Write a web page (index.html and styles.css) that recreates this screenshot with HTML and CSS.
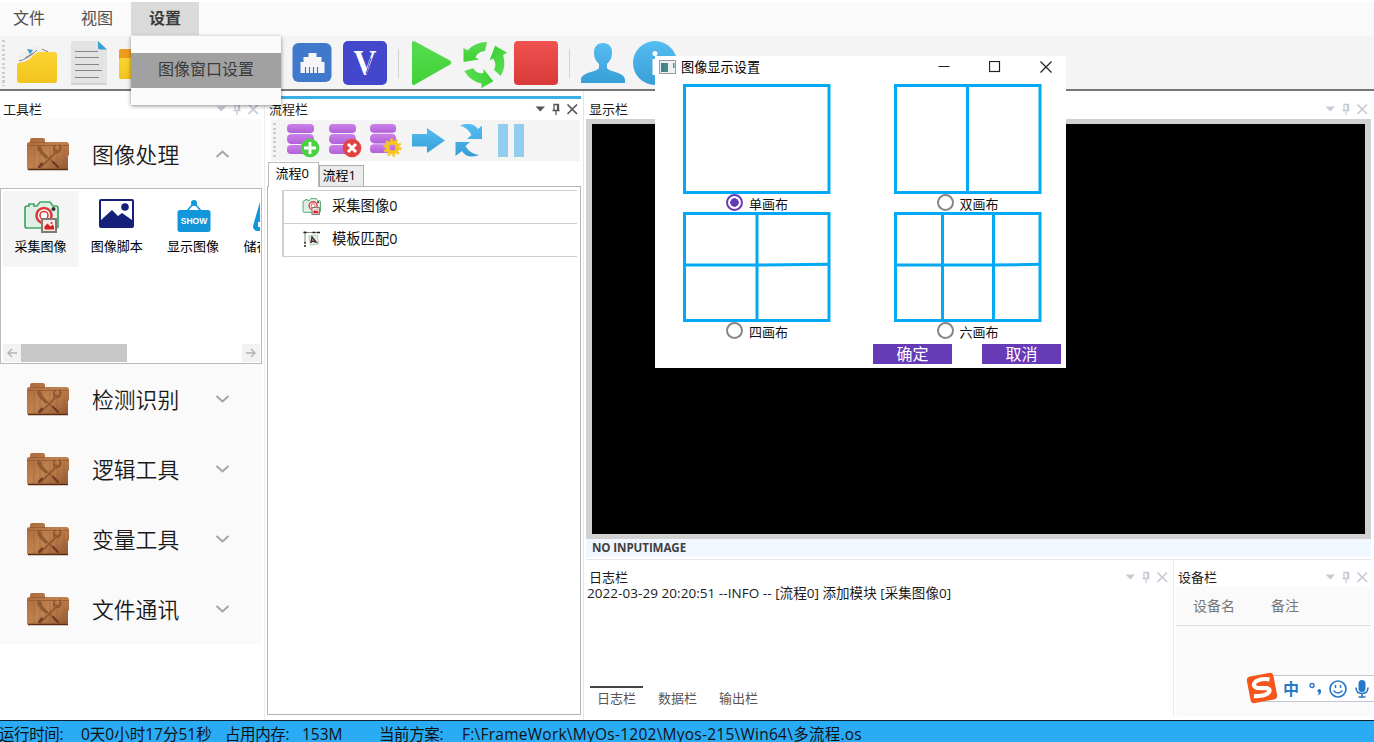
FILE: index.html
```html
<!DOCTYPE html>
<html lang="zh-CN">
<head>
<meta charset="utf-8">
<title>流程编辑器</title>
<link rel="stylesheet" href="styles.css">
</head>
<body>
<svg class="defs" width="0" height="0">
  <defs>
    <linearGradient id="gy" x1="0" y1="0" x2="0" y2="1"><stop offset="0" stop-color="#fbd433"/><stop offset="1" stop-color="#f2c31c"/></linearGradient>
    <linearGradient id="gg" x1="0" y1="0" x2="0" y2="1"><stop offset="0" stop-color="#58dc52"/><stop offset="1" stop-color="#3fd136"/></linearGradient>
    <linearGradient id="gr" x1="0" y1="0" x2="0" y2="1"><stop offset="0" stop-color="#f05252"/><stop offset="1" stop-color="#d83a3a"/></linearGradient>
    <linearGradient id="gb" x1="0" y1="0" x2="0" y2="1"><stop offset="0" stop-color="#55bdf2"/><stop offset="1" stop-color="#389fd6"/></linearGradient>
    <linearGradient id="gp" x1="0" y1="0" x2="0" y2="1"><stop offset="0" stop-color="#cb80ea"/><stop offset="1" stop-color="#b161d6"/></linearGradient>
    <linearGradient id="gw" x1="0" y1="0" x2="1" y2="1"><stop offset="0" stop-color="#a9693d"/><stop offset=".5" stop-color="#c0834f"/><stop offset="1" stop-color="#91552f"/></linearGradient>
    <symbol id="wood" viewBox="0 0 44 34">
      <path d="M4 5V3q0-2 2-2h11q2 0 2 2v2h21q3 0 3 3v10l-1 1v12q0 2-2 2H3q-2 0-2-2V7q0-2 3-2z" fill="url(#gw)"/>
      <path d="M4 5.500h15M1.500 8.500h41" stroke="#9a5d35" stroke-width="1"/>
      <path d="M8 10v22M14 10v22M24 10v22M31 10v22M38 10v22" stroke="#a0623a" stroke-width=".8" opacity=".7"/>
      <path d="M2 32.500h40" stroke="#5a2d12" stroke-width="1.600"/>
      <path d="M12 8l3 1.500 2 5 5 5-2 2.500-5-4.500-4-5.500z" fill="#8f5a31"/>
      <path d="M29 8l-1 4 2.500 2 3.500-1 0-4q2 3-1 6l-4 1-15 15M28.500 16q-2-6 1-8" fill="none" stroke="#8f5a31" stroke-width="1.800"/>
      <path d="M21 20l6 5" stroke="#8f5a31" stroke-width="1.500"/>
      <path d="M13 30l3-3.500M27 25l5 5" stroke="#6a3822" stroke-width="2" stroke-linecap="round"/>
    </symbol>
    <symbol id="cam" viewBox="0 0 36 34">
      <path d="M4 7h2V5h5v2h3l3-4h10l3 4h3q2 0 2 2v18q0 2-2 2H4q-2 0-2-2V9q0-2 2-2z" fill="#dff0e4" stroke="#44a565" stroke-width="1.700"/>
      <circle cx="21" cy="16.500" r="7.500" fill="#fff" stroke="#dd3b3b" stroke-width="2.600"/>
      <circle cx="21" cy="16.500" r="4" fill="none" stroke="#dd3b3b" stroke-width="1.600"/>
      <circle cx="30.500" cy="10" r="2" fill="#333"/>
      <rect x="19" y="20" width="14" height="13" fill="#f6e6e4" stroke="#827975" stroke-width="2"/>
      <path d="M21.500 30.500v-3l3-3 3 3 2-2 1.500 2v3z" fill="#d91f1f"/><circle cx="28.500" cy="24" r="1" fill="#d91f1f"/>
    </symbol>
    <symbol id="db" viewBox="0 0 32 32">
      <g fill="url(#gp)"><rect x="0" y="0" width="27" height="9" rx="4"/><rect x="0" y="10" width="27" height="10" rx="4.500"/><rect x="0" y="21" width="27" height="9" rx="4"/></g>
    </symbol>
    <symbol id="caret" viewBox="0 0 16 16"><path d="M3.500 5.500h9.500L8.250 10.500z" fill="currentColor"/></symbol>
    <symbol id="pin" viewBox="0 0 16 16"><path d="M6 3.500h4.500v6H6zM4.500 9.500h7M8 9.500v4.500M9.500 3.500v6" fill="none" stroke="currentColor" stroke-width="1.300"/></symbol>
    <symbol id="x" viewBox="0 0 16 16"><path d="M3.500 3.500l9.500 9.500M13 3.500l-9.500 9.500" stroke="currentColor" stroke-width="1.700"/></symbol>
    <symbol id="down" viewBox="0 0 16 12"><path d="M2.500 3L8.500 8.500 14.500 3" fill="none" stroke="#a5a5a5" stroke-width="2"/></symbol>
    <path id="arc" d="M4.500 24V10l4 2.500Q16 4 28 4L26 13Q19 13 16.500 19.500L20 21.500z"/>
  </defs>
</svg>

<div class="app">
  <nav class="menubar">
    <div class="menu">文件</div>
    <div class="menu">视图</div>
    <div class="menu menu-open">设置
      <div class="dropdown"><div class="dropdown-item">图像窗口设置</div></div>
    </div>
  </nav>

  <div class="toolbar">
    <i class="grip"></i>
    <svg class="tool" viewBox="0 0 50 50">
      <path d="M6 18l19-11 4 3 11 6-3 16H10z" fill="#eeeeee"/>
      <path d="M7 23q9-2 18-11M7 26q9-1 20-11M13 20l8-5M30 11l6 3" stroke="#858585" stroke-width="1" fill="none"/>
      <path d="M15 11l6 1-3 4z" fill="#3698cf"/>
      <path d="M5 27q0-2.500 3-2.500c12 0 12-10.500 20-10.500h14q3 0 3 3v25q0 3-3 3H8q-3 0-3-3z" fill="url(#gy)"/>
    </svg>
    <svg class="tool" viewBox="0 0 50 50">
      <path d="M9 5q0-2 2-2h25l9 9v33q0 2-2 2H11q-2 0-2-2z" fill="#e2e3e4"/><path d="M9 46h36" stroke="#cbcccd" stroke-width="1.500"/>
      <path d="M36 3l9 8.500h-7q-2 0-2-2z" fill="#3ba0d4"/>
      <path d="M13 13.500h23M13 19.500h24M13 26.500h24M13 32.500h27M13 39.500h24" stroke="#858585" stroke-width="1"/>
    </svg>
    <svg class="tool" viewBox="0 0 50 50"><path d="M7 13q0-2 2-2h12l5 4h19v12H7z" fill="#ef9b20"/><rect x="7" y="20" width="39" height="21" rx="2" fill="url(#gy)"/></svg>
    <svg class="tool tool-net" viewBox="0 0 50 50">
      <rect x="5.500" y="5" width="39" height="39" rx="6" fill="#4078cc"/>
      <path d="M21.500 15h8v4h5v5h3v11H13.500V24h3v-5h5z" fill="#f5f5f5"/><path d="M18.500 29v6M22.500 29v6M26.500 29v6M30.500 29v6" stroke="#4078cc" stroke-width="1.200"/>
    </svg>
    <svg class="tool tool-v" viewBox="0 0 50 50">
      <rect x="3" y="3" width="44" height="44" rx="5" fill="#4247cc"/>
      <text x="0" y="37" text-anchor="middle" class="v-mark" transform="translate(25 0) scale(.88 1)">V</text>
      <path d="M26 36L31 20" stroke="#4247cc" stroke-width="1"/>
    </svg>
    <i class="sep"></i>
    <svg class="tool tool-play" viewBox="0 0 50 50"><path d="M6 5q0-3 3-1.500L44 22.500q2.500 2 0 4L9 46.500Q6 48 6 45z" fill="url(#gg)"/></svg>
    <svg class="tool tool-cycle" viewBox="0 0 50 50">
      <g fill="url(#gg)"><use href="#arc"/><use href="#arc" transform="rotate(120 25 25)"/><use href="#arc" transform="rotate(240 25 25)"/></g>
    </svg>
    <svg class="tool tool-stop" viewBox="0 0 50 50"><rect x="3" y="3" width="44" height="44" rx="4" fill="url(#gr)"/></svg>
    <i class="sep"></i>
    <svg class="tool tool-user" viewBox="0 0 50 50"><path d="M25 5c6 0 9 4 9 9 0 6-2 9-5 12v4c2 4 18 4 18 12v3H3v-3c0-8 16-8 18-12v-4c-3-3-5-6-5-12 0-5 3-9 9-9z" fill="url(#gb)"/></svg>
    <svg class="tool" viewBox="0 0 50 50"><circle cx="25" cy="25" r="22" fill="url(#gb)"/><circle cx="25" cy="15.500" r="2.500" fill="#fff"/><path d="M22.500 21h5v16h-5z" fill="#fff"/></svg>
  </div>

  <main class="main">
    <section class="left">
      <header class="dock"><span>工具栏</span><svg><use href="#caret"/></svg><svg><use href="#pin"/></svg><svg><use href="#x"/></svg></header>
      <div class="tools">
        <div class="group group-open"><svg class="wood"><use href="#wood"/></svg><b>图像处理</b><svg class="chev chev-up"><use href="#down"/></svg></div>
        <div class="list">
          <div class="cards">
            <div class="card card-on"><svg width="36" height="34"><use href="#cam"/></svg><span>采集图像</span></div>
            <div class="card"><svg width="36" height="34" viewBox="0 0 36 34"><path d="M2 0h31q2 0 2 2v25q0 2-2 2H2q-2 0-2-2V2q0-2 2-2z" fill="#15207b"/><rect x="2" y="2" width="31" height="24" fill="#fff"/><path d="M2 21l11-10 6 6 4-3 10 7v5H2z" fill="#15207b"/><circle cx="26" cy="8" r="3.800" fill="#15207b"/></svg><span>图像脚本</span></div>
            <div class="card"><svg width="36" height="34" viewBox="0 0 36 34"><path d="M10 13l8-9 8 9" fill="none" stroke="#1296db" stroke-width="1.600"/><circle cx="18" cy="4" r="3" fill="#1296db"/><rect x="1.500" y="11" width="33" height="22" rx="2.500" fill="#1296db"/><text x="18" y="25" text-anchor="middle" class="show">SHOW</text></svg><span>显示图像</span></div>
            <div class="card"><svg width="36" height="34" viewBox="0 0 36 34"><path d="M8 3h20l7 24q0 5-5 5H6q-5 0-5-5z" fill="#1296db"/><path d="M6 23h24v5H6z" fill="#fff"/></svg><span>储存图像</span></div>
          </div>
          <div class="hscroll"><svg viewBox="0 0 18 18"><path d="M14 9H5M9 5L5 9l4 4" fill="none" stroke="#b3b3b3" stroke-width="1.400"/></svg><i></i><svg viewBox="0 0 18 18"><path d="M4 9h9M9 5l4 4-4 4" fill="none" stroke="#b3b3b3" stroke-width="1.400"/></svg></div>
        </div>
        <div class="group"><svg class="wood"><use href="#wood"/></svg><b>检测识别</b><svg class="chev"><use href="#down"/></svg></div>
        <div class="group"><svg class="wood"><use href="#wood"/></svg><b>逻辑工具</b><svg class="chev"><use href="#down"/></svg></div>
        <div class="group"><svg class="wood"><use href="#wood"/></svg><b>变量工具</b><svg class="chev"><use href="#down"/></svg></div>
        <div class="group"><svg class="wood"><use href="#wood"/></svg><b>文件通讯</b><svg class="chev"><use href="#down"/></svg></div>
      </div>
    </section>

    <section class="flow">
      <header class="dock dock-active"><span>流程栏</span><svg><use href="#caret"/></svg><svg><use href="#pin"/></svg><svg><use href="#x"/></svg></header>
      <div class="flowbar">
        <i class="grip"></i>
        <svg viewBox="0 0 34 34"><use href="#db" width="32" height="32"/><circle cx="23" cy="24" r="9.300" fill="#4ad142"/><path d="M23 18v12M17 24h12" stroke="#fff" stroke-width="2.800"/></svg>
        <svg viewBox="0 0 34 34"><use href="#db" width="32" height="32"/><circle cx="23" cy="24" r="9.300" fill="#e14444"/><path d="M19 20l8 8M27 20l-8 8" stroke="#fff" stroke-width="3"/></svg>
        <svg viewBox="0 0 34 34"><use href="#db" width="31" height="31"/><circle cx="22.500" cy="23.500" r="7.800" fill="none" stroke="#f6c522" stroke-width="2.800" stroke-dasharray="2.450 2.450"/><circle cx="22.500" cy="23.500" r="5" fill="none" stroke="#f6c522" stroke-width="4"/></svg>
        <svg viewBox="0 0 34 34"><path d="M0 10h15V4l18 12.500L15 29v-6.500H0z" fill="url(#gb)"/></svg>
        <svg viewBox="0 0 34 34"><path d="M7 1.500Q19-3 25 5l4-3.500V15H14l4.500-4Q15 4 7 1.500zM26 31q-12 4.500-17-4l-6.500 5V18H17l-4.500 4Q17 30 26 31z" fill="url(#gb)"/></svg>
        <svg viewBox="0 0 34 34"><path d="M3 0h10v33H3zM19 0h10v33H19z" fill="#93cdee"/></svg>
      </div>
      <div class="tabs"><div class="tab tab-on">流程<span>0</span></div><div class="tab">流程<span>1</span></div></div>
      <div class="flowbody">
        <div class="steps">
          <div class="step"><svg viewBox="0 0 36 34"><use href="#cam"/></svg>采集图像0</div>
          <div class="step"><svg viewBox="0 0 18 18"><path d="M2.500 1v13M1 2.500h16" stroke="#666" stroke-width=".8"/><path d="M1 2.500h3M10 2.500h3M14.500 2.500h3M2.500 12v1.500M2.500 15v2" stroke="#222" stroke-width="1.500"/><path d="M6 6l9-1 1 9-8 1z" fill="#e2f1e7" stroke="#9cc7ab" stroke-width=".8"/><path d="M8.500 13l1-6 4 5-4-1" fill="none" stroke="#4d252c" stroke-width="1.500"/></svg>模板匹配0</div>
        </div>
      </div>
    </section>

    <section class="right">
      <header class="dock"><span>显示栏</span><svg><use href="#caret"/></svg><svg><use href="#pin"/></svg><svg><use href="#x"/></svg></header>
      <div class="viewer"></div>
      <div class="imgstate">NO INPUTIMAGE</div>
      <div class="bottom">
        <div class="log">
          <header class="dock"><span>日志栏</span><svg><use href="#caret"/></svg><svg><use href="#pin"/></svg><svg><use href="#x"/></svg></header>
          <div class="logtext">2022-03-29 20:20:51 --INFO -- [流程0] 添加模块 [采集图像0]</div>
          <div class="logtabs"><span class="on">日志栏</span><span>数据栏</span><span>输出栏</span></div>
        </div>
        <div class="device">
          <header class="dock"><span>设备栏</span><svg><use href="#caret"/></svg><svg><use href="#pin"/></svg><svg><use href="#x"/></svg></header>
          <div class="devtable"><div class="devhead"><span>设备名</span><span>备注</span></div></div>
        </div>
      </div>
    </section>
  </main>

  <footer class="status"><span class="s1">运行时间:</span><span class="s2">0天0小时17分51秒</span><span class="s3">占用内存:</span><span class="s4">153M</span><span class="s5">当前方案:</span><span class="s6">F:\FrameWork\MyOs-1202\Myos-215\Win64\多流程.os</span></footer>
</div>

<div class="dialog">
  <div class="titlebar">
    <svg width="17" height="14" viewBox="0 0 17 14"><rect x=".5" y=".5" width="16" height="13" fill="#eef1f3" stroke="#949ba1"/><rect x="2" y="3" width="7" height="9" fill="#448f83"/><rect x="2" y="3" width="3" height="9" fill="#4b79a3"/><rect x="14" y="3" width="1.500" height="5" fill="#4b9a83"/></svg>
    <span>图像显示设置</span>
    <svg class="win" viewBox="0 0 12 12"><path d="M.5 5.500h11" stroke="#222"/></svg>
    <svg class="win" viewBox="0 0 12 12"><rect x=".5" y=".5" width="10" height="10" fill="none" stroke="#222" stroke-width="1.200"/></svg>
    <svg class="win" viewBox="0 0 12 12"><path d="M.5.500l11 11M11.500.500l-11 11" stroke="#222" stroke-width="1.200"/></svg>
  </div>
  <div class="layouts">
    <div class="opt"><svg class="pane" viewBox="0 0 148 110"><rect x="1.500" y="1.500" width="144.500" height="107"/></svg><label><i class="radio radio-on"></i>单画布</label></div>
    <div class="opt"><svg class="pane" viewBox="0 0 148 110"><rect x="1.500" y="1.500" width="144.500" height="107"/><path d="M73.500 1v108"/></svg><label><i class="radio"></i>双画布</label></div>
    <div class="opt"><svg class="pane" viewBox="0 0 148 110"><rect x="1.500" y="1.500" width="144.500" height="107"/><path d="M74 1v108M1 53h73l73-.7"/></svg><label><i class="radio"></i>四画布</label></div>
    <div class="opt"><svg class="pane" viewBox="0 0 148 110"><rect x="1.500" y="1.500" width="144.500" height="107"/><path d="M48.500 1v108M99.500 1v108M1 53h98l48-.7"/></svg><label><i class="radio"></i>六画布</label></div>
  </div>
  <div class="buttons"><button>确定</button><button>取消</button></div>
</div>

<div class="ime">
  <svg class="ime-logo" width="32" height="32" viewBox="0 0 32 32"><g transform="rotate(-11 16 16)"><rect x="2.500" y="2.500" width="27" height="27" rx="4" fill="#f6561b"/><path d="M25 9Q17 6 11 8.500 6 12 11.500 15q4 1 9 2 5 2.500 0 5.500-5 2-14 0" fill="none" stroke="#fff" stroke-width="4.200"/></g></svg>
  <span class="ime-cn">中</span>
  <svg width="14" height="14" viewBox="0 0 14 14"><circle cx="3" cy="3.500" r="2" fill="none" stroke="#2878c8" stroke-width="1.400"/><path d="M8.500 8q2.500-2 3.500.500.500 4-3.500 5 1.500-1.500 1.300-3-1.800 0-1.300-2.500z" fill="#2878c8"/></svg>
  <svg class="smile" width="18" height="18" viewBox="0 0 18 18"><circle cx="9" cy="9" r="8" fill="none" stroke="#2878c8" stroke-width="1.700"/><path d="M6.500 5v3M11.500 5v3M4.500 10.500q4.500 5 9 0" fill="none" stroke="#2878c8" stroke-width="1.500"/></svg>
  <svg class="mic" width="14" height="18" viewBox="0 0 14 18"><rect x="3.500" y="0" width="7" height="12" rx="3.500" fill="#2878c8"/><path d="M1 7.500q0 6 6 6t6-6M7 13v4M3.500 17h7" fill="none" stroke="#2878c8" stroke-width="1.600"/></svg>
</div>
</body>
</html>
```
FILE: styles.css
```css
* { box-sizing: border-box; }
body { margin: 0; width: 1374px; height: 742px; overflow: hidden; position: relative; background: #fff; color: #1a1a1a; font: 13px/18px "Open Sans", "Noto Sans CJK SC", sans-serif; white-space: nowrap; }
svg { display: block; flex: none; }
.defs { position: absolute; }
.app { display: flex; flex-direction: column; height: 742px; padding-top: 2px; }

.menubar { display: flex; height: 34px; background: #fafafa; font-size: 16px; color: #505050; flex: none; }
.menu { width: 68px; height: 33px; line-height: 32px; padding-left: 13px; }
.menu-open { position: relative; margin-left: -5px; padding-left: 18px; background: #dadada; font-weight: 600; color: #3a3a3a; }
.dropdown { position: absolute; z-index: 5; left: 0; top: 34px; width: 150px; height: 69px; padding: 17px 0; background: #fafafa; box-shadow: 0 1px 4px rgba(0,0,0,.45); font-weight: 400; }
.dropdown-item { height: 35px; line-height: 32px; padding-left: 27px; background: #a1a1a1; color: #3a3a3a; }

.toolbar { display: flex; align-items: center; height: 55px; padding: 1px 0 0 5px; background: #f4f4f4; border-bottom: 2px solid #777; flex: none; }
.grip { width: 3px; height: 46px; margin-left: -3px; background: repeating-linear-gradient(#ccc 0 2px, transparent 2px 4.500px); }
.tool { width: 50px; height: 50px; }
.grip + .tool { margin-left: 7px; }
.tool-net { margin-left: 125px; }
.tool-v { margin-left: 3px; }
.sep { width: 1px; height: 29px; background: #d2d2d2; margin-left: 8px; }
.tool-play { margin-left: 7px; }
.tool-cycle { margin-left: 3px; }
.tool-stop { margin-left: 2px; }
.tool-user { margin-left: 8px; }
.tool-user + .tool { margin-left: 2px; }
.v-mark { font: bold 36px "Liberation Serif", serif; fill: #fff; }

.main { display: flex; height: 629px; flex: none; }
.dock { display: flex; align-items: center; height: 20px; color: #c5cbd6; flex: none; }
.dock span { flex: 1; color: #1a1a1a; }
.dock svg { width: 16px; height: 16px; }

.left { width: 265px; padding: 8px 2px 0 0; border-right: 1px solid #ececec; flex: none; }
.left .dock { padding: 0 1px 0 3px; }
.tools { width: 262px; background: #fafafa; }
.group { display: flex; align-items: center; height: 70px; padding-left: 26px; }
.group-open { height: 69px; }
.wood { width: 44px; height: 34px; }
.group b { width: 122px; margin: 0 0 0 22px; font-family: "Noto Sans CJK SC", sans-serif; font-size: 21.800px; line-height: 30px; font-weight: 350; color: #1a1a1a; }
.chev { width: 16px; height: 12px; }
.chev-up { transform: scaleY(-1); }
.list { height: 176px; border: 1px solid #b9bbc0; background: #fff; padding: 2px 1px 1px 2px; display: flex; flex-direction: column; justify-content: space-between; }
.cards { display: flex; gap: .3px; overflow: hidden; }
.card { width: 76px; height: 76px; padding-top: 8px; display: flex; flex-direction: column; align-items: center; flex: none; color: #000; }
.card-on { background: #f5f5f5; }
.card span { margin: 4px 1px 0 0; }
.show { font: bold 8.500px "Liberation Sans", sans-serif; fill: #fff; }
.hscroll { display: flex; height: 18px; }
.hscroll svg { width: 18px; height: 18px; background: #f2f2f2; }
.hscroll i { width: 106px; background: #c7c7c7; margin-right: auto; }

.flow { width: 319px; padding: 5px 2px 5px 0; border-right: 1px solid #e6e6e6; flex: none; display: flex; flex-direction: column; }
.dock-active { height: 24px; padding: 0 1px 1px 4px; border-top: 3px solid #3cafe4; color: #555; }
.flowbar { display: flex; align-items: center; height: 41px; margin: 0 1px 0 6px; padding: 0 0 0 5px; background: #f4f4f4; flex: none; }
.flowbar .grip { height: 35px; margin: 0 11px 0 -3px; }
.flowbar svg { width: 34px; height: 34px; margin-right: 7.500px; }
.tabs { display: flex; align-items: flex-end; height: 25px; padding-left: 2.500px; flex: none; }
.tab { height: 21px; width: 45px; line-height: 19px; padding-left: 3px; border: 1px solid #acacac; border-bottom: 0; background: #ececec; color: #000; }
.tab-on { position: relative; height: 25px; width: 51px; margin-bottom: -1px; line-height: 21px; padding-left: 7px; background: #fff; border-color: #bbb; }
.flowbody { flex: 1; margin-left: 2px; padding: 3px 3px 0 14px; border: 1px solid #b5b5b5; }
.steps { border: solid #cfcfcf; border-width: 1px 0 0 2px; }
.step { display: flex; align-items: center; height: 33px; gap: 11px; padding: 0 0 2px 18px; font-size: 14.300px; color: #111; border-bottom: 1px solid #cfcfcf; }
.step svg { width: 19px; height: 18px; }

.right { flex: 1; padding: 8px 3px 0 2px; }
.right > .dock { padding: 0 1px 0 3px; }
.viewer { height: 420px; background: #000; border: solid #d1d1d1; border-width: 5px 6px; }
.imgstate { height: 18px; padding-left: 6px; line-height: 18px; background: #f0f7fe; font-size: 11.600px; font-weight: 700; color: #404040; letter-spacing: -.1px; }
.bottom { display: flex; height: 157px; margin-top: 2px; border-top: 1px solid #e8e8e8; }
.log { width: 588px; padding: 7px 3px 0 0; display: flex; flex-direction: column; border-right: 1px solid #e9e9e9; flex: none; }
.log .dock { padding-left: 3px; }
.logtext { line-height: 14px; margin-top: -1px; padding-left: 1px; font-size: 13.500px; letter-spacing: .05px; }
.logtabs { display: flex; gap: 8px; margin: auto 0 5px 4px; color: #555; }
.logtabs span { width: 53px; height: 25px; line-height: 21px; padding-left: 7px; border-top: 2px solid transparent; }
.logtabs .on { border-color: #444; }
.device { flex: 1; padding: 7px 0 0 2px; }
.device .dock { padding: 0 1px 0 2px; height: 19px; }
.devtable { height: 130px; background: #fafafa; border-radius: 4px; }
.devhead { display: flex; height: 40px; line-height: 39px; padding-left: 17px; font-size: 14px; color: #777; border-bottom: 1px solid #dedede; }
.devhead span { width: 78px; }

.status { height: 22px; display: flex; border-top: 1px solid #10202c; background: #29abf6; font-size: 15.500px; line-height: 26px; color: #111; flex: none; }
.status span { flex: none; }
.s1 { width: 82px; margin-left: -1px; }
.s1, .s3, .s5 { letter-spacing: -.4px; }
.s2 { width: 144px; }
.s3 { width: 77px; }
.s4 { width: 77px; }
.s5 { width: 83px; }
.s6 { letter-spacing: .25px; }

.dialog { position: absolute; z-index: 10; left: 655px; top: 56px; width: 411px; height: 312px; background: #fff; }
.titlebar { display: flex; align-items: center; height: 21px; margin-bottom: 7px; padding-left: 4px; }
.titlebar span { width: 257px; flex: none; margin-left: 5px; font-size: 13.200px; line-height: 16px; color: #000; }
.win { width: 12px; height: 12px; margin-right: 39px; }
.layouts { display: grid; grid-template-columns: 147px 147px; column-gap: 63.500px; grid-auto-rows: 127.500px; padding-left: 28px; }
.pane { width: 148px; height: 110px; fill: none; stroke: #03a9f4; stroke-width: 3; }
.opt label { display: flex; height: 17px; padding-left: 43px; gap: 6px; line-height: 20px; color: #111; }
.radio { width: 17px; height: 17px; border: 2px solid #858585; border-radius: 50%; }
.radio-on { border-color: #673ab7; background: radial-gradient(#673ab7 0 4px, #fff 4.500px); }
.buttons { display: flex; justify-content: flex-end; gap: 30px; padding: 5px 5px 0 0; }
.buttons button { width: 79px; height: 20px; padding: 0; border: 0; background: #673ab7; color: #fff; font: 16px/18px "Open Sans", "Noto Sans CJK SC", sans-serif; }

.ime { position: absolute; z-index: 8; left: 1260px; top: 675px; width: 120px; height: 27px; display: flex; align-items: center; background: #fff; border: 1px solid #c5c5d0; color: #2878c8; }
.ime-logo { margin: -2px 5px 0 -15px; }
.ime-cn { font-size: 16px; font-weight: 700; margin-right: 10px; }
.smile { margin-left: 6px; }
.mic { margin-left: 8px; }
```
